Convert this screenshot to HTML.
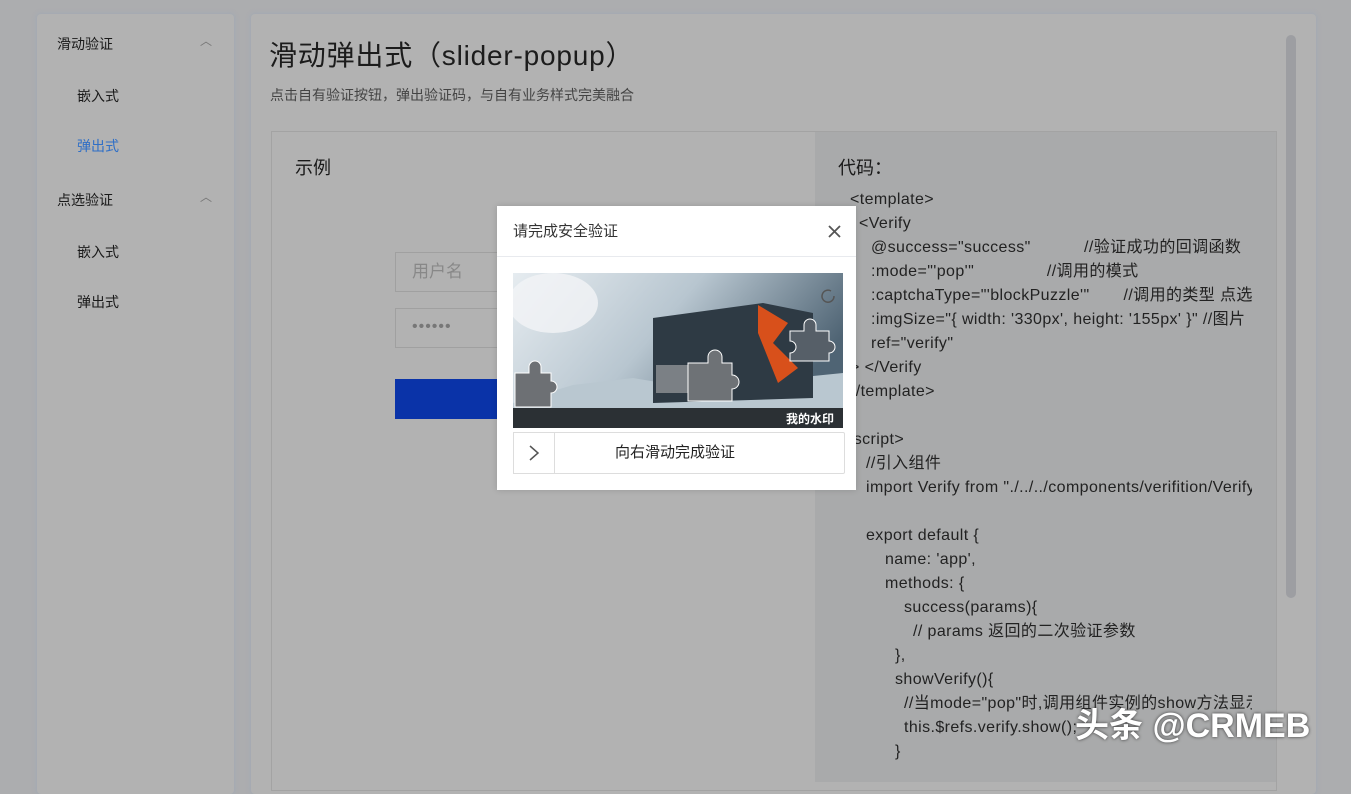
<!DOCTYPE html>
<html><head><meta charset="utf-8"><style>
*{margin:0;padding:0;box-sizing:border-box}
body{width:1351px;height:770px;overflow:hidden;background:#acadaf;font-family:"Liberation Sans","Noto Sans CJK SC",sans-serif;position:relative;color:#1a1a1a}
.card{position:absolute;background:#b2b2b2;border-radius:4px;box-shadow:0 0 4px 1px #a2a9b4}
.side{left:37px;top:14px;width:197px;height:780px}
.main{left:251px;top:14px;width:1065px;height:780px}
.t{position:absolute;white-space:nowrap;line-height:1.2}
.box{position:absolute;left:271px;top:131px;width:1006px;height:660px;border:1px solid #a3a3a3;background:#b2b2b2}
.code{position:absolute;left:815px;top:132px;width:461px;height:650px;background:#a9aaab}
.cl{position:absolute;left:0;font-size:16px;line-height:20px;height:20px;color:#222;white-space:nowrap;letter-spacing:.4px}
.inp{position:absolute;left:395px;width:120px;height:40px;border:1px solid #a0a0a0;background:#b2b2b2}
.modal{position:absolute;left:497px;top:206px;width:359px;height:284px;background:#fff;box-shadow:0 0 6px rgba(0,0,0,.15)}
</style></head><body>
<div class="card side"></div>
<div class="card main"></div>
<div class="t" style="left:57px;top:36px;font-size:14px">滑动验证</div>
<div class="t" style="left:200px;top:34px;font-size:12px;color:#777">︿</div>
<div class="t" style="left:77px;top:88px;font-size:14px">嵌入式</div>
<div class="t" style="left:77px;top:138px;font-size:14px;color:#2f6fc7">弹出式</div>
<div class="t" style="left:57px;top:192px;font-size:14px">点选验证</div>
<div class="t" style="left:200px;top:190px;font-size:12px;color:#777">︿</div>
<div class="t" style="left:77px;top:244px;font-size:14px">嵌入式</div>
<div class="t" style="left:77px;top:294px;font-size:14px">弹出式</div>

<div class="t" style="left:269px;top:39px;font-size:28px;color:#1c1c1c;letter-spacing:.8px">滑动弹出式（slider-popup）</div>
<div class="t" style="left:270px;top:87px;font-size:14px;color:#444">点击自有验证按钮，弹出验证码，与自有业务样式完美融合</div>
<div class="box"></div>
<div class="code"></div>
<div style="position:absolute;left:1286px;top:35px;width:10px;height:563px;border-radius:5px;background:#9d9ea2"></div>
<div class="t" style="left:295px;top:158px;font-size:18px">示例</div>
<div class="inp" style="top:252px"><span class="t" style="left:16px;top:9px;font-size:17px;color:#888">用户名</span></div>
<div class="inp" style="top:308px"><span class="t" style="left:16px;top:8px;font-size:16px;color:#777;letter-spacing:1px">••••••</span></div>
<div style="position:absolute;left:395px;top:379px;width:120px;height:40px;background:#0a33a8"></div>

<div class="t" style="left:838px;top:158px;font-size:18px">代码：</div>
<div style="position:absolute;left:850px;top:190px;width:402px;height:580px;overflow:hidden">
<div class="cl" style="top:0px">&lt;template&gt;</div>
<div class="cl" style="top:24px;left:9px">&lt;Verify</div>
<div class="cl" style="top:48px;left:21px">@success="success" &nbsp; &nbsp; &nbsp; &nbsp; &nbsp; //验证成功的回调函数</div>
<div class="cl" style="top:72px;left:21px">:mode="'pop'" &nbsp; &nbsp; &nbsp; &nbsp; &nbsp; &nbsp; &nbsp; //调用的模式</div>
<div class="cl" style="top:96px;left:21px">:captchaType="'blockPuzzle'" &nbsp; &nbsp; &nbsp; //调用的类型 点选</div>
<div class="cl" style="top:120px;left:21px">:imgSize="{ width: '330px', height: '155px' }" //图片</div>
<div class="cl" style="top:144px;left:21px">ref="verify"</div>
<div class="cl" style="top:168px;left:0px">&gt; &lt;/Verify</div>
<div class="cl" style="top:192px;left:-4px">&lt;/template&gt;</div>
<div class="cl" style="top:240px;left:-6px">&lt;script&gt;</div>
<div class="cl" style="top:264px;left:16px">//引入组件</div>
<div class="cl" style="top:288px;left:16px">import Verify from "./../../components/verifition/Verify"</div>
<div class="cl" style="top:336px;left:16px">export default {</div>
<div class="cl" style="top:360px;left:35px">name: 'app',</div>
<div class="cl" style="top:384px;left:35px">methods: {</div>
<div class="cl" style="top:408px;left:54px">success(params){</div>
<div class="cl" style="top:432px;left:63px">// params 返回的二次验证参数</div>
<div class="cl" style="top:456px;left:45px">},</div>
<div class="cl" style="top:480px;left:45px">showVerify(){</div>
<div class="cl" style="top:504px;left:54px">//当mode="pop"时,调用组件实例的show方法显示</div>
<div class="cl" style="top:528px;left:54px">this.$refs.verify.show();</div>
<div class="cl" style="top:552px;left:45px">}</div>
</div>
<div class="t" style="left:1075px;top:706px;font-size:34px;color:#fff;font-weight:bold;text-shadow:0 0 3px #333">头条 @CRMEB</div>

<div class="modal">
<div class="t" style="left:16px;top:17px;font-size:15px;color:#333">请完成安全验证</div>
<svg style="position:absolute;left:331px;top:19px" width="13" height="13"><path d="M1 1L12 12M12 1L1 12" stroke="#555" stroke-width="1.8"/></svg>
<div style="position:absolute;left:0;top:50px;width:359px;height:1px;background:#e8eaee"></div>
<svg style="position:absolute;left:16px;top:67px" width="330" height="155">
<defs><linearGradient id="sk" x1="0" y1="0" x2="1" y2="0.4"><stop offset="0" stop-color="#e6ecf0"/><stop offset=".5" stop-color="#b8c6d0"/><stop offset="1" stop-color="#4f6474"/></linearGradient></defs>
<rect width="330" height="155" fill="url(#sk)"/>
<ellipse cx="40" cy="30" rx="45" ry="30" fill="#f2f4f6" opacity=".8"/>
<polygon points="0,130 60,112 120,105 180,115 330,100 330,140 0,140" fill="#b9c7d0"/>
<rect y="135" width="330" height="20" fill="#2b3034"/>
<polygon points="140,45 250,30 300,40 300,125 140,130" fill="#2e3a44"/>
<polygon points="245,32 275,50 260,70 285,95 265,110 245,60" fill="#d8501b"/>
<rect x="143" y="92" width="55" height="28" fill="#7b8085"/>
<path d="M175 90h20v-6a7 7 0 0 1 14 0v6h10v12a7 7 0 0 1 0 14v12h-44z" fill="#6e7276" stroke="#fff" stroke-width="1"/>
<path d="M277 58h14v-6a6 6 0 0 1 12 0v6h13v10a6 6 0 0 1 0 12v8h-39v-8a6 6 0 0 0 0-12z" fill="#565f68" stroke="#fff" stroke-width="1"/>
<path d="M2 100h14v-6a6 6 0 0 1 12 0v6h10v8a6 6 0 0 1 0 12v14h-36z" fill="#6d7074" stroke="#fff" stroke-width="1"/>
<path d="M318 18a6 6 0 1 0 3 5" stroke="#555" fill="none" stroke-width="1.5"/>
<text x="273" y="150" font-size="12" fill="#fff" font-weight="bold" font-family="Noto Sans CJK SC,sans-serif">我的水印</text>
</svg>
<div style="position:absolute;left:16px;top:226px;width:332px;height:42px;border:1px solid #ddd;border-radius:2px"></div>
<div style="position:absolute;left:16px;top:226px;width:42px;height:42px;border:1px solid #ddd;background:#fff"></div>
<svg style="position:absolute;left:30px;top:238px" width="14" height="18"><path d="M3 2l8 7-8 7" stroke="#555" stroke-width="1.5" fill="none"/></svg>
<div class="t" style="left:118px;top:238px;font-size:15px;color:#222">向右滑动完成验证</div>
</div>
</body></html>
